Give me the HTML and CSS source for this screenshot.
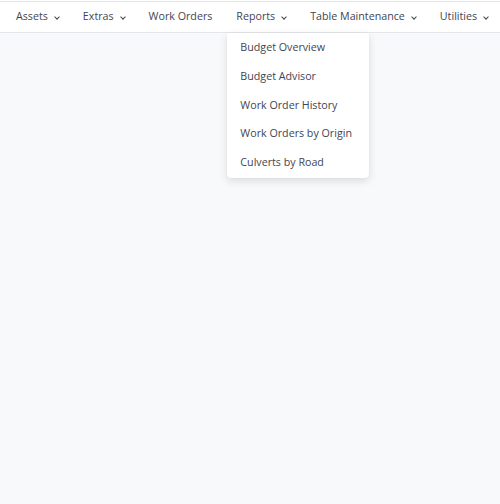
FILE: index.html
```html
<!DOCTYPE html>
<html>
<head>
<meta charset="utf-8">
<link rel="stylesheet" href="styles.css">
</head>
<body>
<nav class="navbar">
  <ul class="nav">
    <li class="nav-item"><span class="nav-link">Assets<span class="caret"></span></span></li>
    <li class="nav-item"><span class="nav-link">Extras<span class="caret"></span></span></li>
    <li class="nav-item"><span class="nav-link">Work Orders</span></li>
    <li class="nav-item open"><span class="nav-link">Reports<span class="caret"></span></span>
      <ul class="dropdown">
        <li class="dropdown-item">Budget Overview</li>
        <li class="dropdown-item">Budget Advisor</li>
        <li class="dropdown-item">Work Order History</li>
        <li class="dropdown-item">Work Orders by Origin</li>
        <li class="dropdown-item">Culverts by Road</li>
      </ul>
    </li>
    <li class="nav-item"><span class="nav-link">Table Maintenance<span class="caret"></span></span></li>
    <li class="nav-item"><span class="nav-link">Utilities<span class="caret"></span></span></li>
  </ul>
</nav>
</body>
</html>
```
FILE: styles.css
```css
html, body { margin: 0; padding: 0; }
body {
  background: #f8f9fb;
  font-family: "Open Sans", "Noto Sans", sans-serif;
  font-size: 10.7px;
  color: #3f4652;
  height: 504px;
  overflow: hidden;
}
.navbar {
  border-top: 1px solid #fff;
  background: #fff;
}
.nav {
  list-style: none;
  margin: 0;
  padding: 0 0 0 4px;
  display: flex;
  height: 30px;
  border-top: 1px solid #e6e7ea;
  border-bottom: 1px solid #e6e7ea;
  white-space: nowrap;
}
.nav-item { position: relative; }
.nav-link {
  display: flex;
  align-items: center;
  height: 28px;
  padding: 0 12px 2px;
}
.caret {
  display: inline-block;
  width: 3px;
  height: 3px;
  border-right: 1.5px solid #3f4652;
  border-bottom: 1.5px solid #3f4652;
  transform: rotate(45deg);
  margin-left: 7px;
  margin-top: 2px;
}
.dropdown {
  position: absolute;
  top: 31px;
  left: 3px;
  list-style: none;
  margin: 0;
  padding: 0 0 1px;
  width: 142px;
  background: #fff;
  border-radius: 0 0 4px 4px;
  box-shadow: 0 3px 8px rgba(0,0,0,0.12), 0 0 1px rgba(0,0,0,0.1);
}
.dropdown-item {
  height: 28.8px;
  line-height: 28.8px;
  padding: 0 13px;
}
```
